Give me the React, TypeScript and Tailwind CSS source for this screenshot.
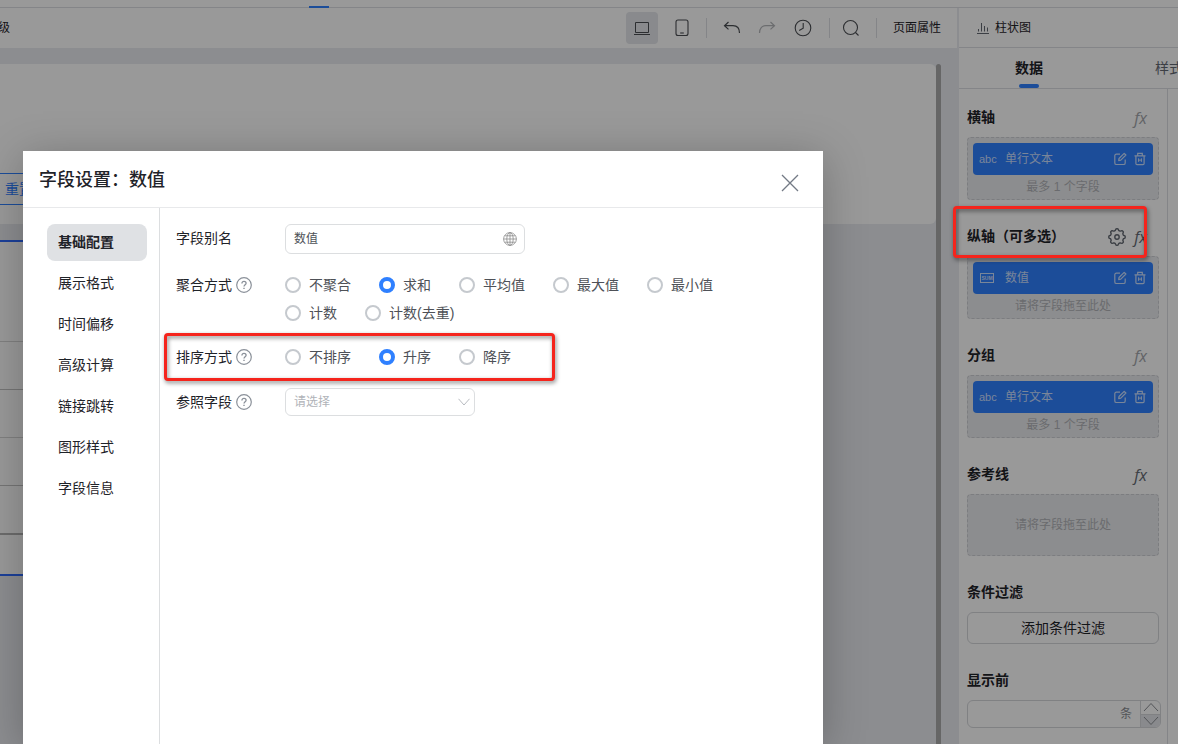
import { ReactNode, useState } from 'react';
import clsx from 'clsx';

const menuItems = ['基础配置', '展示格式', '时间偏移', '高级计算', '链接跳转', '图形样式', '字段信息'];
const aggregateOptions = ['不聚合', '求和', '平均值', '最大值', '最小值', '计数', '计数(去重)'];
const sortOptions = ['不排序', '升序', '降序'];

const iconProps = {
  fill: 'none',
  stroke: 'currentColor',
  'aria-hidden': true,
} as const;

function HelpIcon() {
  return (
    <svg {...iconProps} viewBox="0 0 16 16" className="h-4 w-4 shrink-0 text-[#8a9099]" strokeWidth="1.2">
      <circle cx="8" cy="8" r="7.3" />
      <path d="M5.9 6.4c0-1.3.9-2.1 2.1-2.1s2.1.8 2.1 1.9c0 1.5-2.1 1.7-2.1 3.4" strokeWidth="1.3" />
      <path d="M8 10.7v1.3" strokeWidth="1.4" />
    </svg>
  );
}

function GlobeIcon() {
  return (
    <svg {...iconProps} viewBox="0 0 14 14" className="h-3.5 w-3.5 text-[#8c8c8c]" strokeWidth="0.8">
      <circle cx="7" cy="7" r="6.4" />
      <ellipse cx="7" cy="7" rx="3.2" ry="6.4" />
      <path d="M7 .6v12.8M.6 7h12.8M1.6 3.8h10.8M1.6 10.2h10.8" />
    </svg>
  );
}

function EditIcon() {
  return (
    <svg {...iconProps} viewBox="0 0 14 14" className="h-3.5 w-3.5" strokeWidth="1.2">
      <path d="M7 2.2H3.400C2.400 2.200 1.800 2.800 1.800 3.800v7.100c0 1 .6 1.600 1.600 1.600h7.200c1 0 1.600-.6 1.600-1.600V7.500" />
      <path d="M5.700 8.700l.3-2.200L11.200 1.300l1.700 1.700-5.100 5.200z" strokeLinejoin="round" />
    </svg>
  );
}

function TrashIcon() {
  return (
    <svg {...iconProps} viewBox="0 0 14 14" className="h-3.5 w-3.5" strokeWidth="1.2">
      <path d="M1.500 3.800h11M4.700 3.600V1.300h4.600v2.300M2.900 3.800v7.700c0 .7.4 1.100 1.100 1.100h6c.7 0 1.100-.4 1.100-1.100V3.800" />
      <path d="M5.600 6.300v3.600M8.400 6.300v3.600M5.600 8.100h2.800" strokeWidth="1" />
    </svg>
  );
}

// eight soft teeth round the hub
const gearPoints = Array.from({ length: 96 }, (_, i) => {
  const angle = (i / 96) * Math.PI * 2;
  const radius = 7.4 + 0.85 * Math.tanh(2 * Math.cos(8 * angle));
  return `${(9 + radius * Math.cos(angle)).toFixed(2)},${(9 + radius * Math.sin(angle)).toFixed(2)}`;
}).join(' ');

function GearIcon() {
  return (
    <svg {...iconProps} viewBox="0 0 18 18" className="h-[18px] w-[18px]" strokeWidth="1.4">
      <polygon points={gearPoints} strokeLinejoin="round" />
      <circle cx="9" cy="9" r="2.2" />
    </svg>
  );
}

function Divider() {
  return <span className="h-5 w-px bg-[#dcdee3]" />;
}

function Toolbar() {
  return (
    <div className="mr-0.5 flex h-10 items-center justify-between bg-white pr-4 text-xs">
      <span className="-ml-0.5 text-[#1f2329]">级</span>
      <div className="flex items-center text-[#4a4d52]">
        <button className="flex h-8 w-8 items-center justify-center rounded bg-[#e4e6eb]" aria-label="桌面端">
          <svg {...iconProps} viewBox="0 0 16 14" className="h-3.5 w-4" strokeWidth="1">
            <path d="M1.500 1.500h13v10h-13zM0 13.500h16" />
          </svg>
        </button>
        <button className="ml-4 flex w-4 justify-center" aria-label="移动端">
          <svg {...iconProps} viewBox="0 0 14 18" className="h-[18px] w-3.5" strokeWidth="1.1">
            <rect x="1" y="1" width="12" height="15.500" rx="2" />
            <path d="M5.200 14h3.600" />
          </svg>
        </button>
        <span className="ml-4 mr-4 flex">
          <Divider />
        </span>
        <button aria-label="撤销">
          <svg {...iconProps} viewBox="0 0 18 14" className="h-3.5 w-[18px]" strokeWidth="1.2">
            <path d="M5.500 1L1.500 4.700l4 3.700M1.500 4.700H10c4 0 6.500 2.800 6.500 7.300" />
          </svg>
        </button>
        <button className="ml-[17px] text-[#b4b6ba]" aria-label="重做">
          <svg {...iconProps} viewBox="0 0 18 14" className="h-3.5 w-[18px]" strokeWidth="1.2">
            <path d="M12.500 1l4 3.700-4 3.700M16.500 4.700H8C4 4.700 1.500 7.500 1.500 12" />
          </svg>
        </button>
        <button className="ml-[18px]" aria-label="历史">
          <svg {...iconProps} viewBox="0 0 18 18" className="h-[18px] w-[18px]" strokeWidth="1.1">
            <circle cx="9" cy="9" r="7.800" />
            <path d="M9.200 4v5.200L5.200 11.500" />
          </svg>
        </button>
        <span className="ml-[17px] mr-3 flex">
          <Divider />
        </span>
        <button aria-label="搜索">
          <svg {...iconProps} viewBox="0 0 18 18" className="h-[18px] w-[18px]" strokeWidth="1.1">
            <circle cx="8.500" cy="8.500" r="7" />
            <path d="M13.500 13.500l3 3" />
          </svg>
        </button>
        <span className="ml-4 mr-4 flex">
          <Divider />
        </span>
        <button className="text-[#1f2329]">页面属性</button>
      </div>
    </div>
  );
}

function Canvas() {
  return (
    <div className="flex flex-1 pr-[18px] pt-4">
      <div className="-ml-2 flex flex-1 flex-col">
        <div className="h-40 rounded-md bg-white pt-[109px]">
          <button className="-ml-3 h-8 w-20 border border-[#2f80ff] pl-6 text-left text-sm text-[#2f80ff]">
            重置
          </button>
        </div>
        <div className="mt-4 w-4/5 border-y-2 border-[#2f6bff] bg-white pt-[99px]">
          <div className="h-12 border-t border-[#d5d5d5]" />
          <div className="h-12 border-t border-[#c4c4c4]" />
          <div className="h-12 border-t border-[#d5d5d5]" />
          <div className="h-12 border-t border-[#c4c4c4]" />
          <div className="h-[41px] border-t-2 border-[#b4b4b4]" />
        </div>
      </div>
      <div className="w-[5px] rounded-t bg-[#aaaaaa]" />
    </div>
  );
}

function Fx({ active }: { active?: boolean }) {
  return (
    <button
      className={clsx(
        "font-['Open_Sans',sans-serif] text-base leading-5 font-medium italic",
        active ? 'text-[#646a73]' : 'text-[#a3a6ab]',
      )}
      aria-label="公式"
    >
      fx
    </button>
  );
}

function Section({ title, action, children }: { title: string; action?: ReactNode; children: ReactNode }) {
  return (
    <section className="relative flex flex-col gap-2.5">
      <div className="flex h-5 items-center justify-between pr-3">
        <h3 className="text-sm font-bold text-[#1f2329]">{title}</h3>
        <div className="flex items-center gap-2 pt-0.5">{action}</div>
      </div>
      {children}
    </section>
  );
}

function FieldBox({ type, name, hint }: { type: ReactNode; name: string; hint: string }) {
  return (
    <div className="rounded border border-dashed border-[#cfd1d6] bg-[#eaebee] p-[5px] pb-0.5">
      <div className="flex h-8 items-center rounded bg-[#2f80ff] px-1.5 text-xs text-white/75">
        <span className="w-[26px]">{type}</span>
        <span className="flex-1">{name}</span>
        <button className="mr-1.5" aria-label="编辑">
          <EditIcon />
        </button>
        <button aria-label="删除">
          <TrashIcon />
        </button>
      </div>
      <p className="mt-0.5 text-center text-xs leading-5 text-[#b1b3b8]">{hint}</p>
    </div>
  );
}

function SidePanel() {
  const text = <span className="font-['Liberation_Sans',sans-serif] text-[11px]">abc</span>;
  const sum = (
    <span className="ml-px flex h-2.5 w-3.5 items-center justify-center border border-current font-['Liberation_Sans',sans-serif] text-[5px] leading-none font-bold">
      SUM
    </span>
  );

  return (
    <aside className="flex w-[219px] shrink-0 flex-col bg-white">
      <div className="flex h-10 items-center gap-1.5 border-b border-[#dcdee3] pl-[18px] text-xs text-[#1f2329]">
        <svg {...iconProps} viewBox="0 0 12 12" className="h-3 w-3 text-[#646a73]" strokeWidth="1">
          <path d="M0 11.500h12M1.500 9.500V7M4.500 9.500V1M7.500 9.500V4M10.500 9.500V5.500" />
        </svg>
        柱状图
      </div>
      <div className="flex h-[41px] overflow-hidden border-b border-[#dcdee3] text-sm" role="tablist">
        <button role="tab" aria-selected className="flex w-[140px] shrink-0 flex-col items-center justify-end font-bold text-[#1f2329]">
          数据
          <span className="mt-1.5 h-1 w-5 rounded-sm bg-[#2f80ff]" />
        </button>
        <button role="tab" aria-selected={false} className="w-[140px] shrink-0 text-[#646a73]">
          样式
        </button>
      </div>
      <div className="mr-2.5 flex flex-1 flex-col gap-[26px] border-r border-[#dcdee3] pl-2 pr-2 pt-[18px]">
        <Section title="横轴" action={<Fx />}>
          <FieldBox type={text} name="单行文本" hint="最多 1 个字段" />
        </Section>
        <Section
          title="纵轴（可多选）"
          action={
            <>
              <button className="text-[#646a73]" aria-label="设置">
                <GearIcon />
              </button>
              <Fx active />
              <span className="pointer-events-none absolute -left-3.5 -top-5 right-3 z-20 h-[52px] rounded border-[3px] border-[#f5241c] drop-shadow-[1px_2px_2px_rgba(0,0,0,0.5)]" />
            </>
          }
        >
          <FieldBox type={sum} name="数值" hint="请将字段拖至此处" />
        </Section>
        <Section title="分组" action={<Fx />}>
          <FieldBox type={text} name="单行文本" hint="最多 1 个字段" />
        </Section>
        <Section title="参考线" action={<Fx active />}>
          <div className="flex h-[62px] items-center justify-center rounded border border-dashed border-[#cfd1d6] bg-[#eaebee] text-xs text-[#b1b3b8]">
            请将字段拖至此处
          </div>
        </Section>
        <Section title="条件过滤">
          <button className="h-8 rounded-md border border-[#d5d7db] text-sm text-[#1f2329]">添加条件过滤</button>
        </Section>
        <Section title="显示前">
          <div className="-mr-0.5 flex h-7 overflow-hidden rounded-md border border-[#d5d7db] text-xs text-[#8a8d93]">
            <input className="min-w-0 flex-1 px-2 outline-none" aria-label="显示前" />
            <span className="self-center pr-2">条</span>
            <div className="flex w-5 flex-col border-l border-[#d5d7db]">
              <button className="flex flex-1 items-center justify-center" aria-label="增加">
                <svg {...iconProps} viewBox="0 0 16 10" className="h-2.5 w-4">
                  <path d="M1 9l7-7.500L15 9" />
                </svg>
              </button>
              <button className="flex flex-1 items-center justify-center border-t border-[#d5d7db] bg-[#e4e6eb]" aria-label="减少">
                <svg {...iconProps} viewBox="0 0 16 10" className="h-2.5 w-4">
                  <path d="M1 1l7 7.500L15 1" />
                </svg>
              </button>
            </div>
          </div>
        </Section>
      </div>
    </aside>
  );
}

type RadioGroupProps = {
  name: string;
  options: string[];
  value: string;
  onChange: (value: string) => void;
};

function RadioGroup({ name, options, value, onChange }: RadioGroupProps) {
  return (
    <div className="flex flex-1 flex-wrap gap-x-7 gap-y-2" role="radiogroup" aria-label={name}>
      {options.map((option) => (
        <label key={option} className="flex h-5 items-center gap-2 text-sm text-[#4e5157]">
          <input
            type="radio"
            name={name}
            checked={value === option}
            onChange={() => onChange(option)}
            className="h-4 w-4 appearance-none rounded-full border-2 border-[#c5c9ce] bg-white checked:border-4 checked:border-[#2f80ff]"
          />
          {option}
        </label>
      ))}
    </div>
  );
}

function FieldDialog() {
  const [activeMenu, setActiveMenu] = useState(menuItems[0]);
  const [aggregate, setAggregate] = useState('求和');
  const [sort, setSort] = useState('升序');
  const [alias, setAlias] = useState('数值');

  return (
    <div
      role="dialog"
      aria-label="字段设置"
      className="flex w-full max-w-[800px] flex-col bg-white shadow-[0_6px_40px_rgba(0,0,0,0.25)]"
    >
      <header className="flex h-[57px] items-center justify-between border-b border-[#e8e9eb] pl-4 pr-6 pt-0.5">
        <h2 className="text-lg font-medium text-[#1f2329]">字段设置：数值</h2>
        <button aria-label="关闭" className="mt-1.5">
          <svg {...iconProps} viewBox="0 0 18 18" className="h-[18px] w-[18px] text-[#737a85]" strokeWidth="1.3">
            <path d="M1 1l16 16M17 1L1 17" />
          </svg>
        </button>
      </header>
      <div className="flex flex-1">
        <nav className="flex w-[137px] flex-col gap-1 border-r border-[#dcdee0] pl-6 pr-3 pt-4">
          {menuItems.map((item) => (
            <button
              key={item}
              onClick={() => setActiveMenu(item)}
              className={clsx(
                'h-[37px] rounded-lg px-[11px] pb-0.5 text-left text-sm text-[#1f2329]',
                activeMenu === item && 'bg-[#dfe1e4] font-bold',
              )}
            >
              {item}
            </button>
          ))}
        </nav>
        <form className="flex-1 pl-4 pr-8 pt-4 text-sm text-[#1f2329]">
          <div className="flex">
            <label htmlFor="alias" className="w-[109px] leading-7">
              字段别名
            </label>
            <div className="flex h-[30px] w-60 items-center rounded-md border border-[#dcdee0] pl-2 pr-[7px]">
              <input
                id="alias"
                value={alias}
                onChange={(event) => setAlias(event.target.value)}
                className="min-w-0 flex-1 text-xs text-[#4e5157] outline-none"
              />
              <GlobeIcon />
            </div>
          </div>
          <div className="mt-[21px] flex">
            <div className="flex h-5 w-[109px] items-center gap-1">
              聚合方式
              <HelpIcon />
            </div>
            <RadioGroup name="聚合方式" options={aggregateOptions} value={aggregate} onChange={setAggregate} />
          </div>
          <div className="relative mt-6 flex">
            <div className="flex h-5 w-[109px] items-center gap-1">
              排序方式
              <HelpIcon />
            </div>
            <RadioGroup name="排序方式" options={sortOptions} value={sort} onChange={setSort} />
            <span className="pointer-events-none absolute -left-3 -top-3.5 h-12 w-[391px] rounded border-[3px] border-[#f5241c] drop-shadow-[1px_2px_2px_rgba(0,0,0,0.5)]" />
          </div>
          <div className="mt-[21px] flex items-center">
            <label htmlFor="reference" className="flex w-[109px] items-center gap-1">
              参照字段
              <HelpIcon />
            </label>
            <div className="relative">
              <select
                id="reference"
                defaultValue=""
                className="h-7 w-[190px] appearance-none rounded-md border border-[#dcdee0] pl-2 text-xs text-[#b0b3b8] outline-none"
              >
                <option value="">请选择</option>
              </select>
              <svg {...iconProps} viewBox="0 0 12 8" className="pointer-events-none absolute right-[5px] top-2.5 h-2 w-3 text-[#b8bbc0]">
                <path d="M.5.800L6 7 11.500.800" />
              </svg>
            </div>
          </div>
        </form>
      </div>
    </div>
  );
}

export default function App() {
  return (
    <div className="relative flex min-h-screen flex-col overflow-hidden bg-[#eaecf1] font-['Liberation_Sans','Noto_Sans_CJK_SC',sans-serif]">
      <div className="flex h-2 items-end border-b border-[#dcdee3] bg-white">
        <span className="-mb-px ml-[309px] h-0.5 w-5 bg-[#2f80ff]" />
      </div>
      <div className="flex flex-1">
        <main className="flex min-w-0 flex-1 flex-col">
          <Toolbar />
          <Canvas />
        </main>
        <SidePanel />
      </div>
      <div className="absolute inset-0 z-10 flex bg-black/40 pl-[23px] pt-[151px]">
        <FieldDialog />
      </div>
    </div>
  );
}
